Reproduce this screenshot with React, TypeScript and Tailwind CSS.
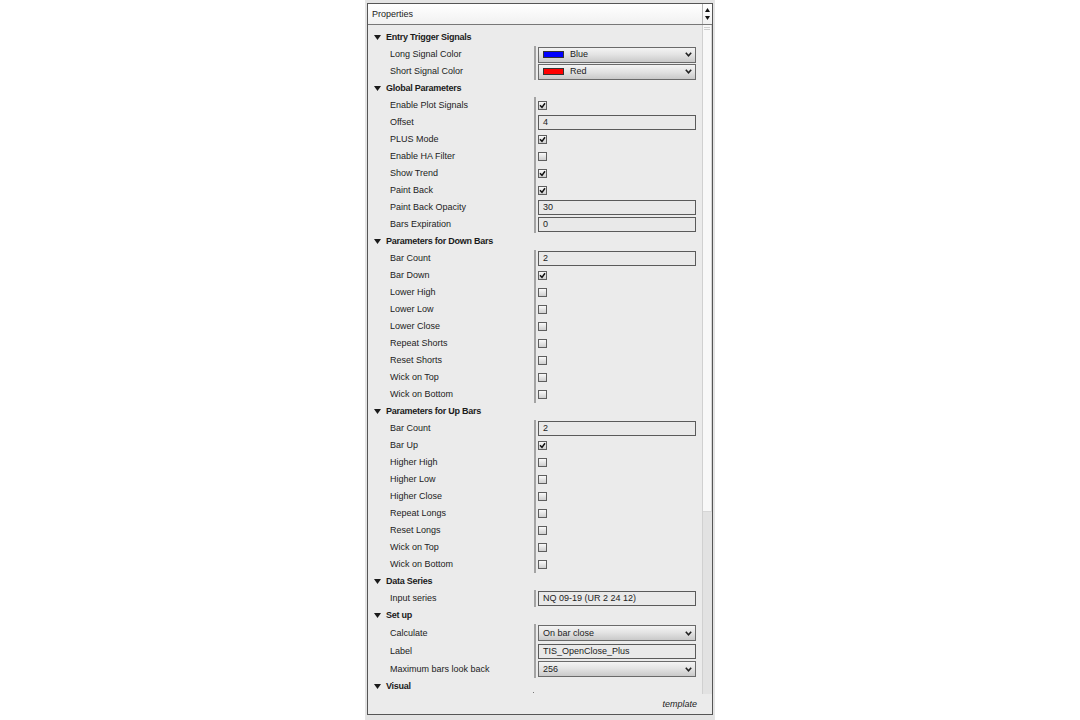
import React from "react";

type Item =
  | { kind: "select"; label: string; value: string; swatch?: string; h?: number }
  | { kind: "text"; label: string; value: string; h?: number }
  | { kind: "check"; label: string; checked: boolean; h?: number };

type Group = { title: string; items: Item[] };

const groups: Group[] = [
  {
    title: "Entry Trigger Signals",
    items: [
      { kind: "select", label: "Long Signal Color", value: "Blue", swatch: "#0000ff" },
      { kind: "select", label: "Short Signal Color", value: "Red", swatch: "#ff0000" },
    ],
  },
  {
    title: "Global Parameters",
    items: [
      { kind: "check", label: "Enable Plot Signals", checked: true },
      { kind: "text", label: "Offset", value: "4" },
      { kind: "check", label: "PLUS Mode", checked: true },
      { kind: "check", label: "Enable HA Filter", checked: false },
      { kind: "check", label: "Show Trend", checked: true },
      { kind: "check", label: "Paint Back", checked: true },
      { kind: "text", label: "Paint Back Opacity", value: "30" },
      { kind: "text", label: "Bars Expiration", value: "0" },
    ],
  },
  {
    title: "Parameters for Down Bars",
    items: [
      { kind: "text", label: "Bar Count", value: "2" },
      { kind: "check", label: "Bar Down", checked: true },
      { kind: "check", label: "Lower High", checked: false },
      { kind: "check", label: "Lower Low", checked: false },
      { kind: "check", label: "Lower Close", checked: false },
      { kind: "check", label: "Repeat Shorts", checked: false },
      { kind: "check", label: "Reset Shorts", checked: false },
      { kind: "check", label: "Wick on Top", checked: false },
      { kind: "check", label: "Wick on Bottom", checked: false },
    ],
  },
  {
    title: "Parameters for Up Bars",
    items: [
      { kind: "text", label: "Bar Count", value: "2" },
      { kind: "check", label: "Bar Up", checked: true },
      { kind: "check", label: "Higher High", checked: false },
      { kind: "check", label: "Higher Low", checked: false },
      { kind: "check", label: "Higher Close", checked: false },
      { kind: "check", label: "Repeat Longs", checked: false },
      { kind: "check", label: "Reset Longs", checked: false },
      { kind: "check", label: "Wick on Top", checked: false },
      { kind: "check", label: "Wick on Bottom", checked: false },
    ],
  },
  {
    title: "Data Series",
    items: [{ kind: "text", label: "Input series", value: "NQ 09-19 (UR 2 24 12)" }],
  },
  {
    title: "Set up",
    items: [
      { kind: "select", label: "Calculate", value: "On bar close", h: 18 },
      { kind: "text", label: "Label", value: "TIS_OpenClose_Plus", h: 18 },
      { kind: "select", label: "Maximum bars look back", value: "256", h: 18 },
    ],
  },
];

function Tri() {
  return (
    <svg width="7" height="5" viewBox="0 0 7 5" className="block">
      <polygon points="0,0 7,0 3.5,5" fill="#1a1a1a" />
    </svg>
  );
}

function Chevron() {
  return (
    <svg width="7" height="5" viewBox="0 0 7 5" className="block">
      <polyline points="0.8,0.8 3.5,3.8 6.2,0.8" fill="none" stroke="#222" strokeWidth="1.6" />
    </svg>
  );
}

function Check({ checked }: { checked: boolean }) {
  return (
    <div className="w-[9px] h-[9px] border border-[#5e5e5e] bg-gradient-to-b from-[#fafafa] to-[#cfcfcf] flex items-center justify-center">
      {checked && (
        <svg width="7" height="7" viewBox="0 0 7 7" className="block">
          <polyline points="1,3.2 3,5.4 6,1.2" fill="none" stroke="#111" strokeWidth="1.5" />
        </svg>
      )}
    </div>
  );
}

function Value({ item }: { item: Item }) {
  if (item.kind === "check") return <Check checked={item.checked} />;
  if (item.kind === "text")
    return (
      <div className="w-[158px] h-[15px] border border-[#5a5a5a] bg-[#e9e9e9] flex items-center pl-[4px] text-[#222]">
        {item.value}
      </div>
    );
  return (
    <div className="w-[158px] h-[16px] border border-[#6a6a6a] bg-gradient-to-b from-[#f4f4f4] via-[#e2e2e2] to-[#c9c9c9] flex items-center pl-[4px] pr-[3px] text-[#222]">
      {item.swatch && (
        <div
          className="w-[21px] h-[7px] border border-[#333] mr-[6px]"
          style={{ background: item.swatch }}
        />
      )}
      <span className="flex-1">{item.value}</span>
      <Chevron />
    </div>
  );
}

function Section({ title }: { title: string }) {
  return (
    <div className="h-[17px] flex items-center pl-[6px]">
      <Tri />
      <span className="ml-[5px] font-bold tracking-[-0.25px] text-[#1a1a1a]">{title}</span>
    </div>
  );
}

export default function App() {
  return (
    <div
      className="w-full h-[720px] bg-white flex justify-center overflow-hidden"
      style={{ fontFamily: '"Liberation Sans", Arial, sans-serif' }}
    >
      <div className="w-[350px] h-[720px] bg-[#e4e4e4] px-[2px] pt-[3px] pb-[5px] text-[9px] leading-none">
        <div className="h-full border border-[#555] bg-[#ebebeb] flex flex-col">
          {/* header */}
          <div className="h-[21px] flex border-b border-[#777] bg-gradient-to-b from-white to-[#f1f1f1]">
            <div className="flex-1 flex items-center pl-[4px] text-[#222]">Properties</div>
            <div className="w-[10px] border-l border-[#b5b5b5] flex flex-col items-center justify-center gap-[4px]">
              <svg width="5" height="4" viewBox="0 0 5 4" className="block">
                <polygon points="0,4 5,4 2.5,0" fill="#111" />
              </svg>
              <svg width="5" height="4" viewBox="0 0 5 4" className="block">
                <polygon points="0,0 5,0 2.5,4" fill="#111" />
              </svg>
            </div>
          </div>
          {/* body */}
          <div className="h-[669px] flex overflow-hidden">
            <div className="w-[334px] pt-[4px] relative">
              {groups.map((g, gi) => (
                <div key={gi}>
                  <Section title={g.title} />
                  {g.items.map((it, ii) => (
                    <div
                      key={ii}
                      className="flex"
                      style={{ height: it.h ?? 17 }}
                    >
                      <div className="w-[166px] pl-[22px] flex items-center text-[#222]">
                        {it.label}
                      </div>
                      <div className="w-[168px] border-l-2 border-[#a3a3a3] pl-[2px] flex items-center">
                        <Value item={it} />
                      </div>
                    </div>
                  ))}
                </div>
              ))}
              <Section title="Visual" />
              <div className="absolute left-[165px] top-[667px] w-[1px] h-[1px] bg-[#777]" />
            </div>
            {/* scrollbar */}
            <div className="w-[10px] border-l border-[#d0d0d0] bg-[#e2e2e2] flex flex-col">
              <div className="h-[487px] bg-[#f8f8f8] border-r border-[#d6d6d6] border-b flex flex-col items-center pt-[2px] gap-[1px]">
                <div className="w-[6px] h-[1px] bg-[#cfcfcf]" />
                <div className="w-[6px] h-[1px] bg-[#cfcfcf]" />
              </div>
            </div>
          </div>
          {/* footer */}
          <div className="flex-1 flex items-center justify-end pr-[15px] italic text-[#222]">
            template
          </div>
        </div>
      </div>
    </div>
  );
}
